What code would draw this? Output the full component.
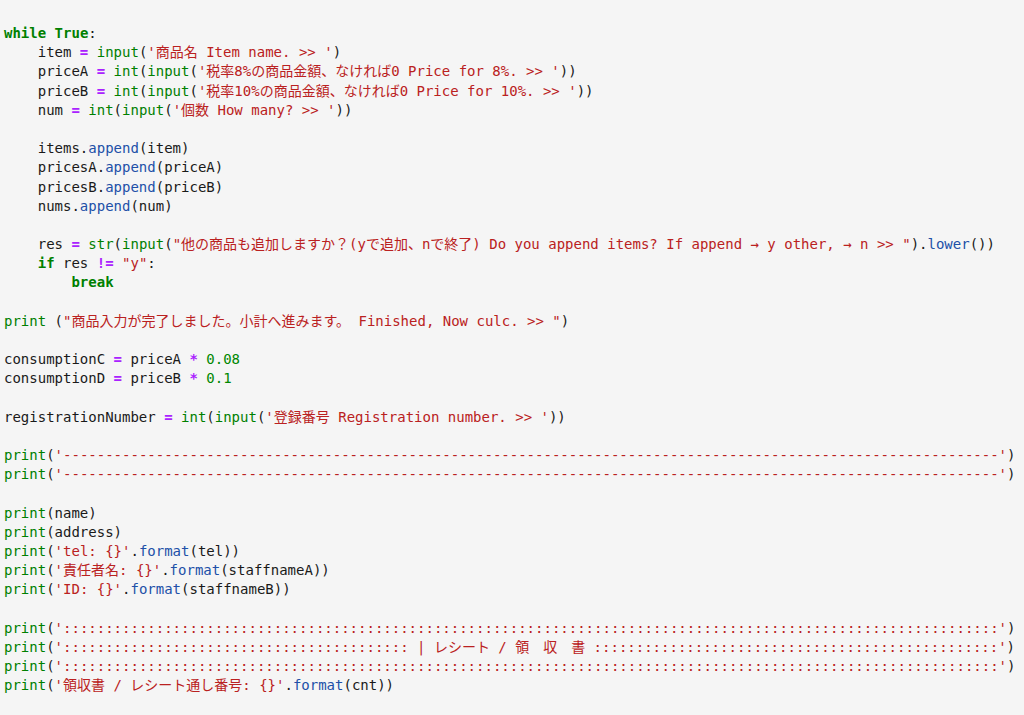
import React from "react";

type Tok = [string, string];

const K = "text-[#008000] font-bold";
const B = "text-[#008000]";
const S = "text-[#ba2121]";
const O = "text-[#aa22ff] font-bold";
const M = "text-[#2150a8]";
const N = "text-[#008800]";
const P = "";

const dashes = "-".repeat(111);
const colons = ":".repeat(111);

const call = (fn: string, str: string, close: string): Tok[] => [
  [B, fn],
  [P, "("],
  [S, str],
  [P, close],
];

const lines: Tok[][] = [
  [[K, "while"], [P, " "], [K, "True"], [P, ":"]],
  [[P, "    item "], [O, "="], [P, " "], ...call("input", "'商品名 Item name. >> '", ")")],
  [
    [P, "    priceA "],
    [O, "="],
    [P, " "],
    [B, "int"],
    [P, "("],
    ...call("input", "'税率8%の商品金額、なければ0 Price for 8%. >> '", "))"),
  ],
  [
    [P, "    priceB "],
    [O, "="],
    [P, " "],
    [B, "int"],
    [P, "("],
    ...call("input", "'税率10%の商品金額、なければ0 Price for 10%. >> '", "))"),
  ],
  [[P, "    num "], [O, "="], [P, " "], [B, "int"], [P, "("], ...call("input", "'個数 How many? >> '", "))")],
  [],
  [[P, "    items."], [M, "append"], [P, "(item)"]],
  [[P, "    pricesA."], [M, "append"], [P, "(priceA)"]],
  [[P, "    pricesB."], [M, "append"], [P, "(priceB)"]],
  [[P, "    nums."], [M, "append"], [P, "(num)"]],
  [],
  [
    [P, "    res "],
    [O, "="],
    [P, " "],
    [B, "str"],
    [P, "("],
    ...call(
      "input",
      "\"他の商品も追加しますか？(yで追加、nで終了) Do you append items? If append → y other, → n >> \"",
      ")."
    ),
    [M, "lower"],
    [P, "())"],
  ],
  [[P, "    "], [K, "if"], [P, " res "], [O, "!="], [P, " "], [S, "\"y\""], [P, ":"]],
  [[P, "        "], [K, "break"]],
  [],
  [[B, "print"], [P, " ("], [S, "\"商品入力が完了しました。小計へ進みます。 Finished, Now culc. >> \""], [P, ")"]],
  [],
  [[P, "consumptionC "], [O, "="], [P, " priceA "], [O, "*"], [P, " "], [N, "0.08"]],
  [[P, "consumptionD "], [O, "="], [P, " priceB "], [O, "*"], [P, " "], [N, "0.1"]],
  [],
  [
    [P, "registrationNumber "],
    [O, "="],
    [P, " "],
    [B, "int"],
    [P, "("],
    ...call("input", "'登録番号 Registration number. >> '", "))"),
  ],
  [],
  call("print", `'${dashes}'`, ")"),
  call("print", `'${dashes}'`, ")"),
  [],
  [[B, "print"], [P, "(name)"]],
  [[B, "print"], [P, "(address)"]],
  [...call("print", "'tel: {}'", "."), [M, "format"], [P, "(tel))"]],
  [...call("print", "'責任者名: {}'", "."), [M, "format"], [P, "(staffnameA))"]],
  [...call("print", "'ID: {}'", "."), [M, "format"], [P, "(staffnameB))"]],
  [],
  call("print", `'${colons}'`, ")"),
  call("print", `'${":".repeat(41)} | レシート / 領　収　書 ${":".repeat(48)}'`, ")"),
  call("print", `'${colons}'`, ")"),
  [...call("print", "'領収書 / レシート通し番号: {}'", "."), [M, "format"], [P, "(cnt))"]],
];

export default function App() {
  return (
    <main className="min-h-screen w-full bg-[#f5f5f5] text-[#1a1a1a]">
      <pre className="pt-[24px] pl-[4px] text-[14px] leading-[19.2px] whitespace-pre font-['DejaVu_Sans_Mono','Noto_Sans_CJK_JP',monospace]">
        {lines.map((line, i) => (
          <div key={i} className="h-[19.2px]">
            {line.map(([cls, text], j) => (
              <span key={j} className={cls}>
                {text}
              </span>
            ))}
          </div>
        ))}
      </pre>
    </main>
  );
}
